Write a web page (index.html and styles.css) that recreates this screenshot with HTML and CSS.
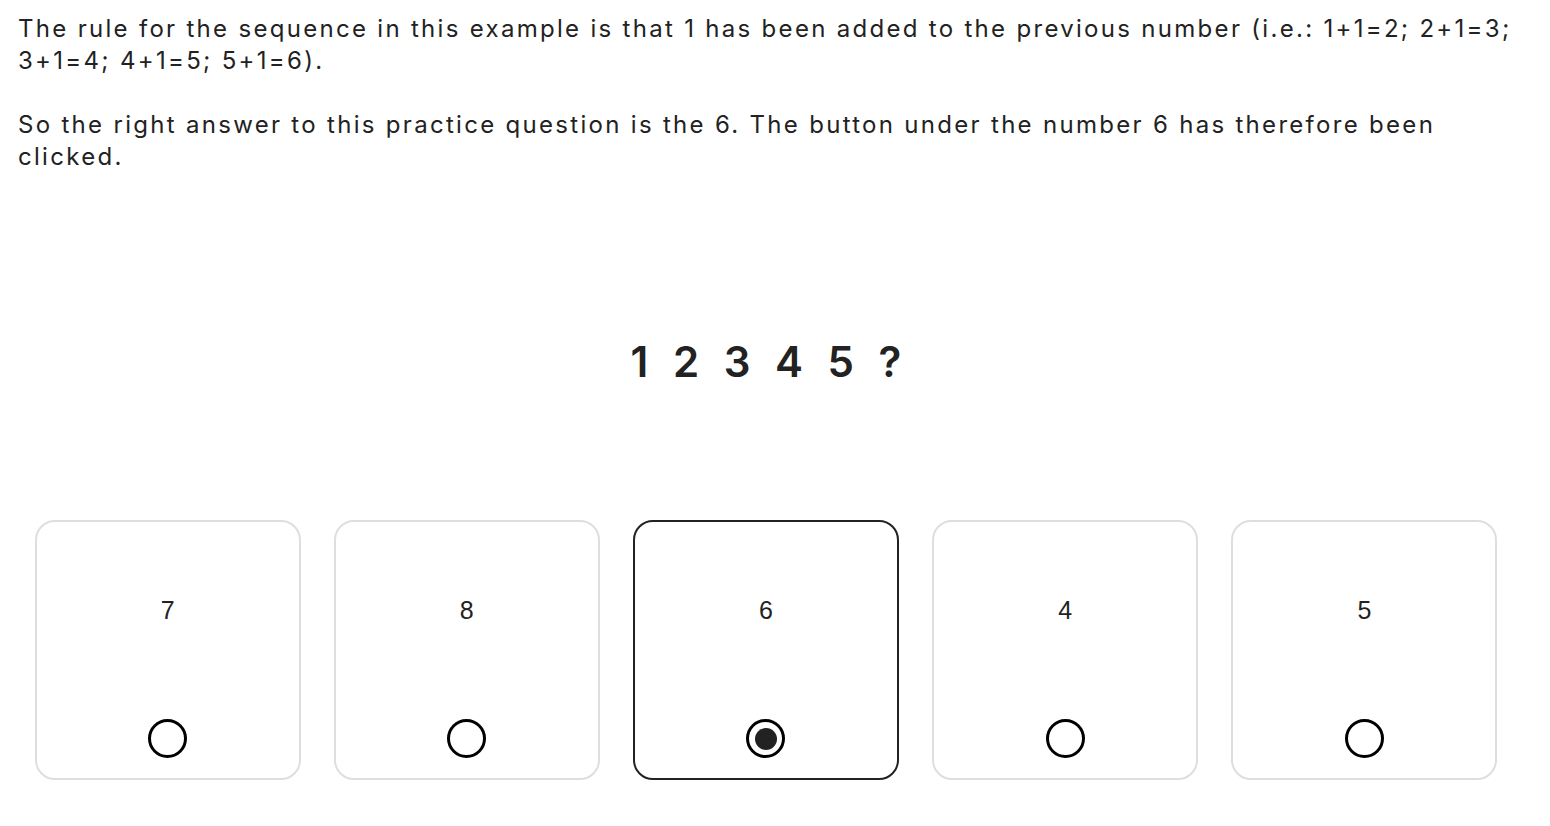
FILE: index.html
```html
<!DOCTYPE html>
<html>
<head>
<meta charset="utf-8">
<link rel="stylesheet" href="styles.css">
</head>
<body>
<main class="page">
  <section class="intro">
    <p>The rule for the sequence in this example is that 1 has been added to the previous number (i.e.: 1+1=2; 2+1=3; 3+1=4; 4+1=5; 5+1=6).</p>
    <p>So the right answer to this practice question is the 6. The button under the number 6 has therefore been clicked.</p>
  </section>
  <div class="sequence">1 2 3 4 5 ?</div>
  <div class="options">
    <div class="cell"><label class="card"><span class="num">7</span><span class="radio"></span></label></div>
    <div class="cell"><label class="card"><span class="num">8</span><span class="radio"></span></label></div>
    <div class="cell"><label class="card selected"><span class="num">6</span><span class="radio checked"></span></label></div>
    <div class="cell"><label class="card"><span class="num">4</span><span class="radio"></span></label></div>
    <div class="cell"><label class="card"><span class="num">5</span><span class="radio"></span></label></div>
  </div>
</main>
</body>
</html>
```

FILE: styles.css
```css
html, body {
  margin: 0;
  padding: 0;
  background: #ffffff;
}
.page {
  width: 1496px;
  margin-left: 18px;
  color: #222222;
  font-family: Inter, "Noto Sans", sans-serif;
}
.intro {
  padding-top: 13px;
}
.intro p {
  margin: 0 0 32px 0;
  font-size: 24px;
  line-height: 32px;
  letter-spacing: 2.3px;
}
.sequence {
  margin-top: 164px;
  text-align: center;
  font-size: 42px;
  font-weight: 600;
  word-spacing: 14px;
  line-height: 50px;
  color: #222222;
}
.options {
  margin-top: 133px;
  display: grid;
  grid-template-columns: repeat(5, 1fr);
}
.cell {
  display: flex;
  justify-content: center;
}
.card {
  box-sizing: border-box;
  width: 266px;
  height: 260px;
  border: 2px solid #dddfdf;
  border-radius: 20px;
  display: flex;
  flex-direction: column;
  align-items: center;
  padding-top: 73px;
  padding-bottom: 20px;
  justify-content: space-between;
}
.card.selected {
  border-color: #222222;
}
.num {
  font-family: "Liberation Sans", Arial, sans-serif;
  font-size: 25px;
  line-height: 30px;
  color: #222222;
}
.radio {
  box-sizing: border-box;
  width: 39px;
  height: 39px;
  border: 3px solid #000000;
  border-radius: 50%;
  display: flex;
  align-items: center;
  justify-content: center;
}
.radio.checked::after {
  content: "";
  width: 22px;
  height: 22px;
  border-radius: 50%;
  background: #222222;
}
```
